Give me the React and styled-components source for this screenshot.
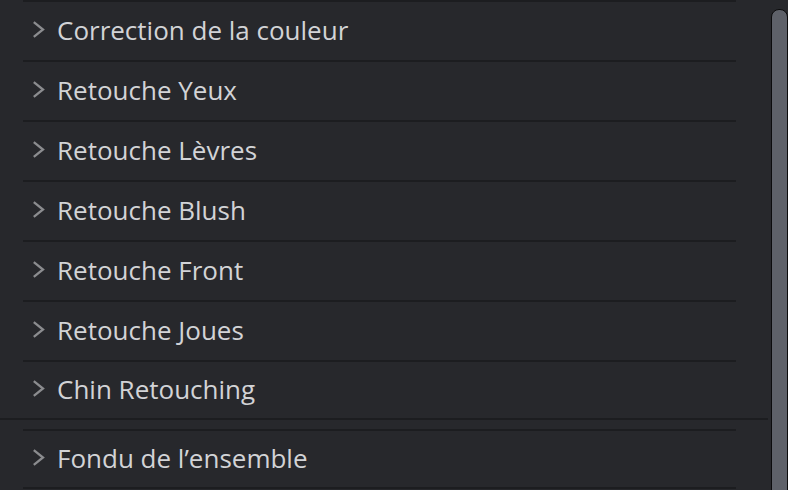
import React from "react";
import styled, { createGlobalStyle } from "styled-components";

const Global = createGlobalStyle`
  html, body { margin: 0; padding: 0; background: #27282c; overflow: hidden; }
  * { box-sizing: border-box; }
`;

const Page = styled.div`
  display: flex;
  width: 788px;
  height: 490px;
  background: #27282c;
  font-family: "Open Sans", "Noto Sans", sans-serif;
  overflow: hidden;
`;

const Panel = styled.div`
  width: 770px;
  display: flex;
  flex-direction: column;
`;

const Group = styled.div`
  display: flex;
  flex-direction: column;
  padding-left: 23px;
  width: 768px;
  border-bottom: ${(p) => (p.$closed ? "2px solid #1c1d20" : "none")};
  margin-bottom: ${(p) => (p.$closed ? "9px" : "0")};
`;

const Row = styled.div`
  display: flex;
  align-items: center;
  width: 713px;
  height: ${(p) => p.$h || 60}px;
  border-top: 2px solid #1c1d20;
  border-bottom: ${(p) => (p.$last ? "2px solid #1c1d20" : "none")};
  padding-left: 9px;
  padding-bottom: 3px;
  gap: 12px;
  color: #d2d3d6;
  font-size: 26px;
`;

const Chevron = styled.svg`
  width: 13px;
  height: 17px;
  flex: none;
`;

const Label = styled.span`
  line-height: 1;
  white-space: nowrap;
`;

const Track = styled.div`
  flex: 1;
  padding-top: 9px;
  display: flex;
  justify-content: flex-end;
`;

const Thumb = styled.div`
  width: 17px;
  height: 500px;
  background: #5e6169;
  border: 1px solid #0c0c0d;
  border-radius: 8px 8px 0 0;
`;

const Item = ({ label, h, last }) => (
  <Row $h={h} $last={last}>
    <Chevron viewBox="0 0 13 17">
      <polyline
        points="1.8,1.2 11,8.5 1.8,15.8"
        fill="none"
        stroke="#8b8c8f"
        strokeWidth="2.3"
      />
    </Chevron>
    <Label>{label}</Label>
  </Row>
);

export default function App() {
  const items = [
    "Correction de la couleur",
    "Retouche Yeux",
    "Retouche Lèvres",
    "Retouche Blush",
    "Retouche Front",
    "Retouche Joues",
  ];
  return (
    <>
      <Global />
      <Page>
        <Panel>
          <Group $closed>
            {items.map((t) => (
              <Item key={t} label={t} />
            ))}
            <Item label="Chin Retouching" h={58} />
          </Group>
          <Group>
            <Item label="Fondu de l’ensemble" h={60} last />
          </Group>
        </Panel>
        <Track>
          <Thumb />
        </Track>
      </Page>
    </>
  );
}
